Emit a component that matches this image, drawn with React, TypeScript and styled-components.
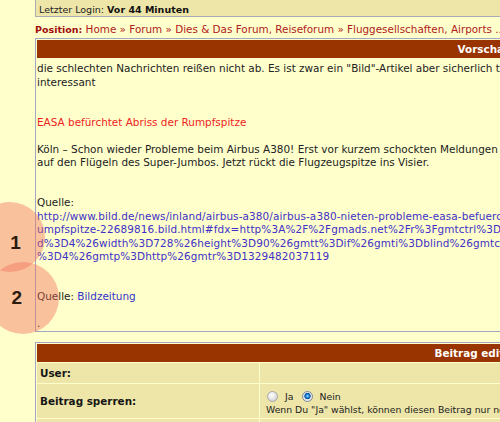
import React from "react";
import styled, { createGlobalStyle } from "styled-components";

const GlobalStyle = createGlobalStyle`
  html, body {
    margin: 0;
    padding: 0;
    overflow: hidden;
    background: #ffffcc;
  }
  body {
    font-family: "DejaVu Sans", Verdana, sans-serif;
    color: #222222;
  }
`;

const Page = styled.div`
  position: relative;
  height: 422px;
  overflow: hidden;
  padding-left: 35px;
`;

const Column = styled.div`
  width: 899px;
`;

const LoginBox = styled.div`
  background: #eee6a8;
  border: 1px solid #a9adb3;
  border-top: none;
  padding: 2.5px 3px 0;
  font-size: 9.5px;
  line-height: 13.4px;
  color: #222222;
  white-space: nowrap;
`;

const LoginValue = styled.b`
  font-weight: bold;
  color: #111111;
`;

const Breadcrumb = styled.nav`
  margin-top: 6px;
  font-size: 10.4px;
  line-height: 13.4px;
  white-space: nowrap;
  color: #b02020;
`;

const CrumbLabel = styled.b`
  font-size: 9.5px;
  font-weight: bold;
  color: #a00c0c;
`;

const Crumb = styled.a`
  color: #b02020;
  text-decoration: none;
`;

const Panel = styled.section<{ $gap: number }>`
  box-sizing: border-box;
  margin-top: ${(p) => p.$gap}px;
  border: 1px solid #a4a6c6;
  padding: 1px;
  background: #ffffcc;
`;

const PanelHeader = styled.div`
  height: 18px;
  background: #993300;
  color: #ffffff;
  font-weight: bold;
  font-size: 10.4px;
  display: flex;
  align-items: center;
  justify-content: center;
`;

const PreviewBody = styled.div`
  padding: 4px 0 0 0;
  font-size: 10.45px;
  line-height: 13.4px;
  white-space: nowrap;
  color: #222222;
`;

const RedTitle = styled.span`
  color: #f02222;
`;

const UrlLink = styled.a`
  color: #4030c8;
  text-decoration: none;
  letter-spacing: 0.12px;
`;

const SourceLink = styled.a`
  color: #3333cc;
  text-decoration: none;
`;

const EditGrid = styled.div`
  display: grid;
  grid-template-columns: 222px 1fr;
  gap: 1px;
  margin-top: 1px;
`;

const LabelCell = styled.div<{ $h: number }>`
  height: ${(p) => p.$h}px;
  background: #eee6a8;
  font-weight: bold;
  font-size: 10.4px;
  color: #151515;
  padding-left: 3px;
  display: flex;
  align-items: center;
`;

const ValueCell = styled.div<{ $h: number }>`
  height: ${(p) => p.$h}px;
  background: #eee6a8;
  padding: 6px 0 0 6px;
  box-sizing: border-box;
  display: flex;
  flex-direction: column;
  font-size: 9.3px;
  color: #222222;
  white-space: nowrap;
`;

const RadioRow = styled.div`
  display: flex;
  align-items: center;
  height: 13px;
  padding-left: 1px;
`;

const Radio = styled.span<{ $checked?: boolean }>`
  display: inline-block;
  width: 11px;
  height: 11px;
  box-sizing: border-box;
  border-radius: 50%;
  border: 1px solid ${(p) => (p.$checked ? "#7f8a9a" : "#a8a8a8")};
  background: ${(p) =>
    p.$checked
      ? "radial-gradient(circle at 50% 45%, #9fe4ff 0, #2a90e0 22%, #0b4d94 42%, #dfe3ea 52%, #f6f6f6 100%)"
      : "radial-gradient(circle at 40% 35%, #ffffff 0, #e8e8e8 45%, #bdbdbd 100%)"};
  margin-right: ${(p) => (p.$checked ? 6 : 7)}px;
`;

const RadioLabel = styled.span`
  margin-right: 9px;
  line-height: 13px;
`;

const Hint = styled.div`
  margin-top: 1px;
  line-height: 12px;
`;

const Marker = styled.div<{ $x: number; $y: number; $r: number }>`
  position: absolute;
  left: ${(p) => p.$x - p.$r}px;
  top: ${(p) => p.$y - p.$r}px;
  width: ${(p) => p.$r * 2}px;
  height: ${(p) => p.$r * 2}px;
  border-radius: 50%;
  background: rgba(240, 110, 90, 0.42);
  pointer-events: none;
`;

const MarkerNum = styled.div<{ $x: number; $y: number }>`
  position: absolute;
  left: ${(p) => p.$x - 10}px;
  top: ${(p) => p.$y - 10}px;
  width: 20px;
  height: 20px;
  line-height: 20px;
  text-align: center;
  font-family: "Liberation Sans", Arial, sans-serif;
  font-weight: bold;
  font-size: 19px;
  color: #2b1a0e;
  pointer-events: none;
`;

export default function App() {
  return (
    <>
      <GlobalStyle />
      <Page>
        <Column>
          <LoginBox>
            Letzter Login: <LoginValue>Vor 44 Minuten</LoginValue>
          </LoginBox>

          <Breadcrumb>
            <CrumbLabel>Position:</CrumbLabel> <Crumb href="#">Home</Crumb> »{" "}
            <Crumb href="#">Forum</Crumb> »{" "}
            <Crumb href="#">Dies &amp; Das Forum, Reiseforum</Crumb> »{" "}
            <Crumb href="#">Fluggesellschaften, Airports ...</Crumb>
          </Breadcrumb>

          <Panel $gap={2}>
            <PanelHeader>Vorschau</PanelHeader>
            <PreviewBody>
              die schlechten Nachrichten reißen nicht ab. Es ist zwar ein "Bild"-Artikel aber sicherlich trotzdem
              <br />
              interessant
              <br />
              <br />
              <br />
              <RedTitle>EASA befürchtet Abriss der Rumpfspitze</RedTitle>
              <br />
              <br />
              Köln – Schon wieder Probleme beim Airbus A380! Erst vor kurzem schockten Meldungen über Haarrisse
              <br />
              auf den Flügeln des Super-Jumbos. Jetzt rückt die Flugzeugspitze ins Visier.
              <br />
              <br />
              <br />
              Quelle:
              <br />
              <UrlLink href="#">
                http://www.bild.de/news/inland/airbus-a380/airbus-a380-nieten-probleme-easa-befuerchtet-abriss-der-r
                <br />
                umpfspitze-22689816.bild.html#fdx=http%3A%2F%2Fgmads.net%2Fr%3Fgmtctrl%3D1%26gmtpid%3D2%26gmtvi
                <br />
                d%3D4%26width%3D728%26height%3D90%26gmtt%3Dif%26gmti%3Dblind%26gmtcl%3Dhttp%26gmtsi
                <br />
                %3D4%26gmtp%3Dhttp%26gmtr%3D1329482037119
              </UrlLink>
              <br />
              <br />
              <br />
              Quelle: <SourceLink href="#">Bildzeitung</SourceLink>
              <br />
              <br />.
            </PreviewBody>
          </Panel>

          <Panel $gap={10}>
            <PanelHeader>Beitrag editieren</PanelHeader>
            <EditGrid>
              <LabelCell $h={20}>User:</LabelCell>
              <ValueCell $h={20} />
              <LabelCell $h={34}>Beitrag sperren:</LabelCell>
              <ValueCell $h={34}>
                <RadioRow>
                  <Radio role="radio" aria-checked="false" />
                  <RadioLabel>Ja</RadioLabel>
                  <Radio role="radio" aria-checked="true" $checked />
                  <RadioLabel>Nein</RadioLabel>
                </RadioRow>
                <Hint>
                  Wenn Du "Ja" wählst, können diesen Beitrag nur noch Moderatoren bearbeiten.
                </Hint>
              </ValueCell>
              <LabelCell $h={40} />
              <ValueCell $h={40} />
            </EditGrid>
          </Panel>
        </Column>

        <Marker $x={10} $y={237} $r={35} />
        <Marker $x={23} $y={298} $r={36} />
        <MarkerNum $x={15.5} $y={243}>1</MarkerNum>
        <MarkerNum $x={16.7} $y={298}>2</MarkerNum>
      </Page>
    </>
  );
}
